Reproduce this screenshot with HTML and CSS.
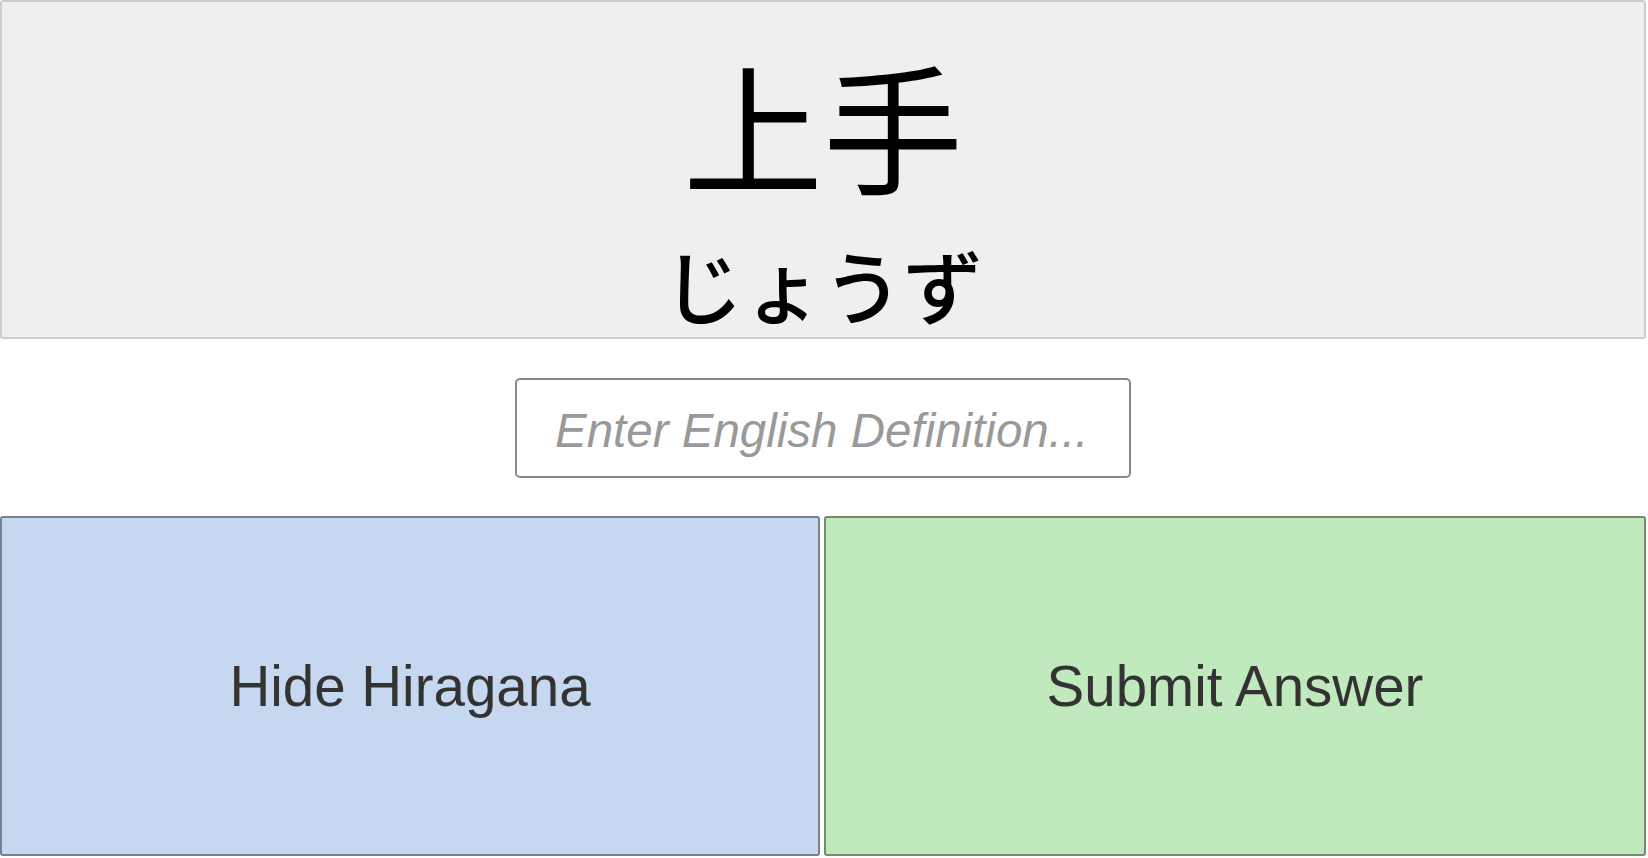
FILE: index.html
```html
<!DOCTYPE html>
<html lang="ja">
<head>
<meta charset="utf-8">
<title>Flashcard</title>
<link rel="stylesheet" href="styles.css">
</head>
<body>
<main class="app">
  <section class="card">
    <div class="kanji">上手</div>
    <div class="kana">じょうず</div>
  </section>
  <div class="answer-row">
    <input class="answer" type="text" placeholder="Enter English Definition...">
  </div>
  <div class="actions">
    <button class="btn btn-hide" type="button">Hide Hiragana</button>
    <button class="btn btn-submit" type="button">Submit Answer</button>
  </div>
</main>
</body>
</html>
```
FILE: styles.css
```css
html, body {
  margin: 0;
  padding: 0;
  background: #ffffff;
}

body {
  font-family: "Liberation Sans", Arial, sans-serif;
}

.app {
  width: 1646px;
  display: flex;
  flex-direction: column;
}

.card {
  box-sizing: border-box;
  height: 339px;
  background: #efefef;
  border: 2px solid #cccccc;
  border-radius: 3px;
  padding-top: 51px;
  display: flex;
  flex-direction: column;
  align-items: center;
  color: #000000;
  font-family: "Noto Sans CJK JP", "Noto Sans", sans-serif;
}

.kanji {
  font-size: 140px;
  line-height: 140px;
  height: 140px;
}

.kana {
  margin-top: 50px;
  font-size: 80px;
  line-height: 80px;
  height: 80px;
  font-weight: 500;
}

.answer-row {
  display: flex;
  justify-content: center;
  padding: 39px 0 38px;
}

.answer {
  box-sizing: border-box;
  width: 616px;
  height: 100px;
  margin: 0;
  padding: 5px 38px 0;
  border: 2px solid #888888;
  border-radius: 5px;
  background: #ffffff;
  font-family: "Liberation Sans", Arial, sans-serif;
  font-size: 47.5px;
  color: #333333;
  outline: none;
}

.answer::placeholder {
  color: #999999;
  font-style: italic;
  opacity: 1;
}

.actions {
  display: grid;
  grid-template-columns: 820px 1fr;
  column-gap: 4px;
}

.btn {
  box-sizing: border-box;
  height: 340px;
  margin: 0;
  padding: 0;
  border: 2px solid rgba(0, 0, 0, 0.4);
  border-radius: 3px;
  font-family: "Liberation Sans", Arial, sans-serif;
  font-size: 56.5px;
  color: #333333;
  cursor: pointer;
}

.btn-hide {
  background: #c5d8f0;
}

.btn-submit {
  background: #c0eabe;
}
```
